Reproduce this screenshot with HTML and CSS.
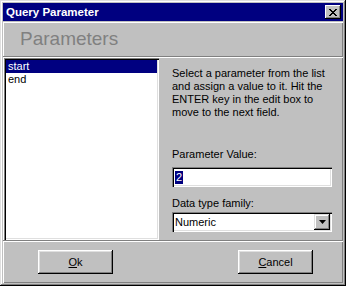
FILE: index.html
```html
<!DOCTYPE html>
<html lang="en">
<head>
    <meta charset="UTF-8">
    <title>Query Parameter</title>
    <link rel="stylesheet" href="styles.css">
</head>
<body>
    <div class="window">
        <div class="titlebar">
            <span class="title">Query Parameter</span>
            <span class="close-btn">
                <svg width="8" height="7" viewBox="0 0 8 7"><path d="M0 0h2v1h1v1h2v-1h1v-1h2v1h-1v1h-1v1h-1v1h1v1h1v1h1v1h-2v-1h-1v-1h-2v1h-1v1h-2v-1h1v-1h1v-1h1v-1h-1v-1h-1v-1h-1z" fill="#000"/></svg>
            </span>
        </div>
        <div class="client">
            <div class="header">Parameters</div>
            <div class="main">
                <ul class="param-list">
                    <li class="selected">start</li>
                    <li>end</li>
                </ul>
                <div class="side">
                    <p class="hint">Select a parameter from the list and assign a value to it. Hit the ENTER key in the edit box to move to the next field.</p>
                    <label class="field-label">Parameter Value:</label>
                    <div class="edit"><span class="sel-text">2</span></div>
                    <label class="field-label type-label">Data type family:</label>
                    <div class="combo">
                        <span class="combo-text">Numeric</span>
                        <span class="combo-btn">
                            <svg width="7" height="4" viewBox="0 0 7 4"><path d="M0 0h7l-3.5 4z" fill="#000"/></svg>
                        </span>
                    </div>
                </div>
            </div>
            <div class="footer">
                <button class="btn"><u>O</u>k</button>
                <button class="btn"><u>C</u>ancel</button>
            </div>
        </div>
    </div>
</body>
</html>
```

FILE: styles.css
```css
body {
    margin: 0;
    font-family: "Liberation Sans", Arial, sans-serif;
    font-size: 11px;
    background-color: #c0c0c0;
}
.window {
    width: 346px;
    height: 286px;
    box-sizing: border-box;
    padding: 3px;
    background-color: #c0c0c0;
    box-shadow: inset -1px -1px #000, inset 1px 1px #dfdfdf, inset -2px -2px #808080, inset 2px 2px #fff;
    display: flex;
    flex-direction: column;
}
.titlebar {
    height: 18px;
    background-color: #000080;
    display: flex;
    align-items: center;
    justify-content: space-between;
    padding: 0 2px 0 3px;
}
.title {
    color: #fff;
    font-weight: bold;
    font-size: 11.5px;
}
.close-btn {
    width: 16px;
    height: 14px;
    box-sizing: border-box;
    background-color: #c0c0c0;
    box-shadow: inset -1px -1px #000, inset 1px 1px #fff, inset -2px -2px #808080;
    display: flex;
    align-items: center;
    justify-content: center;
}
.client {
    flex: 1;
    margin-top: 1px;
    display: flex;
    flex-direction: column;
    box-shadow: inset 1px 1px #fff, inset -1px -1px #808080;
}
.header {
    height: 35px;
    box-sizing: border-box;
    padding: 6px 0 0 17px;
    font-size: 19px;
    color: #808080;
    border-bottom: 1px solid #808080;
    box-shadow: 0 1px #fff;
}
.main {
    display: flex;
    height: 182px;
    margin-top: 1px;
    border-bottom: 1px solid #808080;
    box-shadow: 0 1px #fff;
}
.param-list {
    list-style: none;
    margin: 0 0 0 1px;
    padding: 2px;
    width: 155px;
    box-sizing: border-box;
    background-color: #fff;
    box-shadow: inset 1px 1px #808080, inset 2px 2px #000, inset -1px -1px #fff, inset -2px -2px #dfdfdf;
}
.param-list li {
    height: 13px;
    line-height: 13px;
    padding-left: 2px;
    color: #000;
}
.param-list li.selected {
    background-color: #000080;
    color: #fff;
}
.side {
    flex: 1;
    padding: 9px 0 0 13px;
}
.hint {
    margin: 0;
    width: 160px;
    line-height: 13px;
}
.field-label {
    display: block;
    margin-top: 29px;
    line-height: 13px;
}
.type-label {
    margin-top: 10px;
}
.edit, .combo {
    width: 160px;
    height: 20px;
    box-sizing: border-box;
    background-color: #fff;
    box-shadow: inset 1px 1px #808080, inset 2px 2px #000, inset -1px -1px #fff, inset -2px -2px #dfdfdf;
    display: flex;
    align-items: center;
    padding-left: 3px;
}
.edit {
    margin-top: 6px;
}
.combo {
    margin-top: 2px;
    justify-content: space-between;
    padding-right: 2px;
}
.sel-text {
    background-color: #000080;
    color: #fff;
    line-height: 13px;
    padding: 0 1px;
}
.combo-btn {
    width: 16px;
    height: 16px;
    box-sizing: border-box;
    background-color: #c0c0c0;
    box-shadow: inset -1px -1px #000, inset 1px 1px #dfdfdf, inset -2px -2px #808080, inset 2px 2px #fff;
    display: flex;
    align-items: center;
    justify-content: center;
}
.footer {
    flex: 1;
    margin-top: 1px;
    display: flex;
    justify-content: space-between;
    align-items: flex-start;
    padding: 8px 30px 0 35px;
}
.btn {
    width: 75px;
    height: 24px;
    border: none;
    font-family: "Liberation Sans", Arial, sans-serif;
    font-size: 11px;
    color: #000;
    background-color: #c0c0c0;
    box-shadow: inset -1px -1px #000, inset 1px 1px #fff, inset -2px -2px #808080, inset 2px 2px #dfdfdf;
}
```
